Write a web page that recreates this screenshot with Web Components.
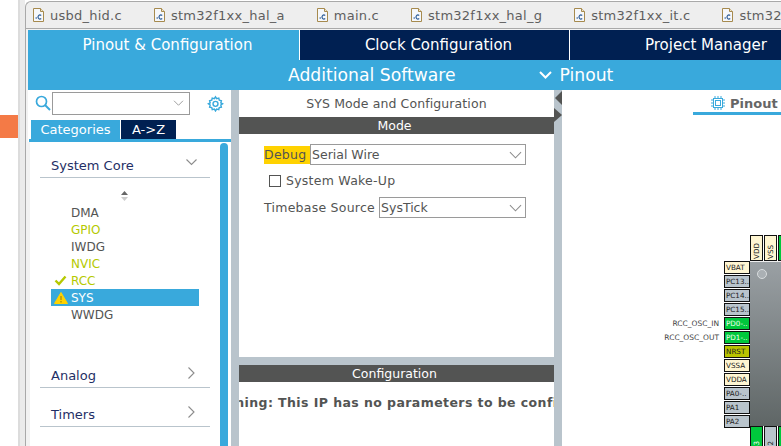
<!DOCTYPE html>
<html>
<head>
<meta charset="utf-8">
<style>
html, body { margin: 0; padding: 0; height: 446px; overflow: hidden; background: #fff; }
body { font-family: "DejaVu Sans", sans-serif; }
</style>
</head>
<body>
<cube-window></cube-window>
<script>
const blue = '#39a9dc'
const navy = '#002052'
const steel = '#b9c4cc'
const dark = '#535453'

const chevronDown = `<svg width="14" height="8" viewBox="0 0 14 8"><path d="M1 1l6 6 6-6" fill="none" stroke="currentColor" stroke-width="1.1"/></svg>`

class FileTab extends HTMLElement {
        constructor () {
                super()
                this.attachShadow({ mode: 'open' }).innerHTML = `
<style>
:host { display: flex; align-items: center; gap: 6px; flex: none; margin-right: 32px; font-size: 13px; color: #5e5e5e; letter-spacing: .25px; white-space: nowrap; }
svg { flex: none; display: block; }
</style>
<svg width="11" height="14" viewBox="0 0 11 14">
        <path d="M.5.5h7l3 3v10H.5z" fill="#f6f8fb" stroke="#a68a4e"/>
        <path d="M7.5.5v3h3" fill="#efe6cc" stroke="#a68a4e"/>
        <circle cx="3.2" cy="10" r=".8" fill="#2f5f9a"/>
        <path d="M8.2 7.4a2 2 0 1 0 0 3.2" fill="none" stroke="#2f5f9a" stroke-width="1.2"/>
</svg>
<slot></slot>`
        }
}

class FileTabs extends HTMLElement {
        constructor () {
                super()
                this.attachShadow({ mode: 'open' }).innerHTML = `
<style>
:host { display: flex; align-items: center; box-sizing: border-box; height: 28px; margin-top: 1px; padding-left: 7px; background: #eeeeee; border-top: 1px solid #a9a9a9; border-bottom: 1px solid #a9a9a9; border-left: 1px solid #a9a9a9; border-top-left-radius: 6px; overflow: hidden; }
</style>
<slot></slot>`
        }
}

class PerspectiveBar extends HTMLElement {
        constructor () {
                super()
                this.attachShadow({ mode: 'open' }).innerHTML = `
<style>
:host { display: block; font-size: 15px; color: #fff; }
.tabs { display: grid; grid-template-columns: 271px 270px 1fr; height: 30px; background: ${navy}; }
.tabs div { display: flex; align-items: center; justify-content: center; padding-left: 8px; box-sizing: border-box; }
.tabs div + div { border-left: 1px solid #fff; }
.tabs .on { background: ${blue}; }
.tabs .third { padding-left: 75px; justify-content: flex-start; white-space: nowrap; }
.sub { display: flex; align-items: center; height: 30px; background: ${blue}; font-size: 17.200px; padding-left: 260px; box-sizing: border-box; padding-bottom: 1px; }
.sub svg { margin-left: 83px; margin-right: 8px; color: #fff; }
</style>
<div class="tabs">
        <div class="on">Pinout &amp; Configuration</div>
        <div>Clock Configuration</div>
        <div class="third">Project Manager</div>
</div>
<div class="sub">
        <span>Additional Software</span>
        <svg width="13" height="8" viewBox="0 0 13 8"><path d="M1 1l5.500 5.500L12 1" fill="none" stroke="#fff" stroke-width="2"/></svg>
        <span>Pinout</span>
</div>`
        }
}

class CategoryRow extends HTMLElement {
        constructor () {
                super()
                const open = this.hasAttribute('open')
                this.attachShadow({ mode: 'open' }).innerHTML = `
<style>
:host { display: flex; align-items: center; justify-content: space-between; box-sizing: border-box; height: 25px; width: 170px; margin-left: 10px; padding: 0 13px 0 11px; border-bottom: 1px solid ${steel}; font-size: 13px; color: #1f2f66; }
:host(:not([open])) { padding-right: 15px; }
svg { display: block; color: #8c8c8c; margin-bottom: 5px; }
</style>
<slot></slot>
${open
        ? `<svg width="11" height="7" viewBox="0 0 11 7"><path d="M.5.5l5 5 5-5" fill="none" stroke="currentColor" stroke-width="1.1"/></svg>`
        : `<svg width="7" height="12" viewBox="0 0 7 12"><path d="M.5.5l5.500 5.500L.5 11.500" fill="none" stroke="currentColor" stroke-width="1.1"/></svg>`}`
        }
}

class PeripheralItem extends HTMLElement {
        constructor () {
                super()
                const state = this.getAttribute('state') || ''
                let mark = ''
                if (state === 'ok') {
                        mark = `<svg width="13" height="11" viewBox="0 0 13 11"><path d="M1.500 5.500l3.500 3.500L11.500 1.500" fill="none" stroke="#b5c900" stroke-width="2.400"/></svg>`
                }
                if (state === 'warn') {
                        mark = `<svg width="14" height="12" viewBox="0 0 14 12"><path d="M7 .5L13.500 11.500H.5z" fill="#ffd200" stroke="#ffd200"/><path d="M7 4v4M7 9v1.500" stroke="#8a7a10" stroke-width="1"/></svg>`
                }
                this.attachShadow({ mode: 'open' }).innerHTML = `
<style>
:host { display: flex; align-items: center; box-sizing: border-box; height: 17px; width: 148px; font-size: 12px; color: #535453; }
:host([tone="lime"]) { color: #b5c900; }
:host([state="ok"]) { color: #b5c900; }
:host([state="warn"]) { background: ${blue}; color: #fff; }
.mark { width: 20px; display: flex; justify-content: center; flex: none; padding-right: 1px; box-sizing: border-box; }
svg { display: block; }
</style>
<span class="mark">${mark}</span><slot></slot>`
        }
}

class CategoryPanel extends HTMLElement {
        constructor () {
                super()
                this.attachShadow({ mode: 'open' }).innerHTML = `
<style>
:host { display: flex; flex-direction: column; flex: none; width: 203px; height: 356px; overflow: hidden; background: #fff; position: relative; }
.search { display: flex; align-items: center; height: 30px; padding: 0 0 4px 7px; box-sizing: border-box; }
.combo { display: flex; align-items: center; justify-content: flex-end; box-sizing: border-box; width: 138px; height: 23px; margin-left: 1px; border: 1px solid #9a9a9a; padding-right: 5px; color: #8c8c8c; }
.gear { margin-left: 17px; }
.switch { display: flex; height: 19px; padding-left: 3px; font-size: 13px; color: #fff; }
.switch div { display: flex; align-items: center; justify-content: center; }
.switch .cat { width: 89px; background: ${blue}; }
.switch .az { width: 55px; margin-left: 1px; background: ${navy}; }
.rule { height: 3px; margin-left: 1px; background: ${blue}; flex: none; }
.body { position: relative; flex: 1; padding-top: 11px; border-left: 2px solid #f2f2f2; }
.scroll { position: absolute; left: 190px; top: 1px; bottom: 0; width: 8px; background: ${blue}; border-radius: 4px 4px 0 0; }
.sort { display: block; margin: 12px 0 2px 90px; }
.list { display: flex; flex-direction: column; margin-left: 21px; }
.analog { margin-top: 40px; }
.timers { margin-top: 14px; }
</style>
<div class="search">
        <svg width="16" height="16" viewBox="0 0 16 16"><circle cx="6.500" cy="6.500" r="5" fill="none" stroke="${blue}" stroke-width="1.700"/><path d="M10 10l5 5" stroke="${blue}" stroke-width="2"/></svg>
        <div class="combo">${chevronDown.replace('width="14"', 'width="11"').replace('height="8"', 'height="6"')}</div>
        <svg class="gear" width="17" height="17" viewBox="0 0 24 24"><path d="M12 2.500l1.600 2.600 3-.8.7 3 3 .7-.8 3 2.600 1.500-2.600 1.600.8 3-3 .7-.7 3-3-.8L12 22.500l-1.600-2.500-3 .8-.7-3-3-.7.8-3L1.900 12.500l2.600-1.500-.8-3 3-.7.7-3 3 .8z" fill="none" stroke="${blue}" stroke-width="2"/><circle cx="12" cy="12.500" r="3.500" fill="none" stroke="${blue}" stroke-width="2"/></svg>
</div>
<div class="switch"><div class="cat">Categories</div><div class="az">A-&gt;Z</div></div>
<div class="rule"></div>
<div class="body">
        <div class="scroll"></div>
        <category-row open>System Core</category-row>
        <svg class="sort" width="9" height="12" viewBox="0 0 9 12"><path d="M4.500 1L8 5H1z" fill="#666"/><path d="M4.500 11L8 7H1z" fill="#ccc"/></svg>
        <div class="list">
                <peripheral-item>DMA</peripheral-item>
                <peripheral-item tone="lime">GPIO</peripheral-item>
                <peripheral-item>IWDG</peripheral-item>
                <peripheral-item tone="lime">NVIC</peripheral-item>
                <peripheral-item state="ok">RCC</peripheral-item>
                <peripheral-item state="warn">SYS</peripheral-item>
                <peripheral-item>WWDG</peripheral-item>
        </div>
        <category-row class="analog">Analog</category-row>
        <category-row class="timers">Timers</category-row>
</div>`
        }
}

class SelectBox extends HTMLElement {
        constructor () {
                super()
                this.attachShadow({ mode: 'open' }).innerHTML = `
<style>
:host { display: flex; align-items: center; justify-content: space-between; box-sizing: border-box; height: 21px; border: 1px solid #9a9a9a; padding: 0 3px 0 1px; font-size: 12.500px; color: #535453; background: #fff; letter-spacing: 0; }
svg { color: #8c8c8c; margin-top: 1px; }
</style>
<slot></slot>${chevronDown.replace('width="14"', 'width="13"')}`
        }
}

class ModePanel extends HTMLElement {
        constructor () {
                super()
                this.attachShadow({ mode: 'open' }).innerHTML = `
<style>
:host { display: flex; flex-direction: column; flex: none; width: 315px; height: 356px; background: ${steel}; overflow: hidden; font-size: 12.500px; color: #535453; letter-spacing: .25px; }
.top { height: 267px; flex: none; background: #fff; }
.title { height: 27px; display: flex; align-items: center; justify-content: center; box-sizing: border-box; font-size: 12.500px; letter-spacing: .1px; }
.head { height: 17px; display: flex; align-items: center; justify-content: center; box-sizing: border-box; padding-right: 4px; background: ${dark}; color: #fff; font-size: 12.500px; letter-spacing: 0; }
.form { padding: 10px 28px 0 25px; }
.row { display: flex; align-items: center; }
.debug { background: #ffd200; width: 46px; height: 18px; display: flex; align-items: center; flex: none; }
.row select-box { flex: 1; }
.wake { height: 32px; padding-left: 5px; gap: 5px; }
.wake span:last-child { margin-bottom: 2px; }
.box { width: 12px; height: 12px; box-sizing: border-box; border: 1px solid #535453; }
.time { gap: 4px; }
.bottom { margin-top: 8px; flex: 1; background: #fff; }
.warn { padding-top: 13px; font-size: 12.500px; font-weight: bold; white-space: nowrap; margin-left: -33px; letter-spacing: .42px; }
</style>
<div class="top">
        <div class="title">SYS Mode and Configuration</div>
        <div class="head">Mode</div>
        <div class="form">
                <div class="row"><span class="debug">Debug</span><select-box>Serial Wire</select-box></div>
                <div class="row wake"><span class="box"></span><span>System Wake-Up</span></div>
                <div class="row time"><span>Timebase Source</span><select-box>SysTick</select-box></div>
        </div>
</div>
<div class="bottom">
        <div class="head">Configuration</div>
        <div class="warn">Warning: This IP has no parameters to be configured.</div>
</div>`
        }
}

class ChipPin extends HTMLElement {
        constructor () {
                super()
                this.attachShadow({ mode: 'open' }).innerHTML = `
<style>
:host { display: flex; align-items: center; box-sizing: border-box; background: ${steel}; color: #222; border: 1px solid #111; font-size: 7.200px; overflow: hidden; white-space: nowrap; padding-left: 1px; flex: none; }
:host([kind="power"]) { background: #fff6d2; }
:host([kind="green"]) { background: #00c83c; color: #f0fff0; }
:host([kind="lime"]) { background: #b9c300; }
:host([side="left"]) { width: 26px; height: 13px; margin-bottom: 1px; }
:host([side="top"]) { width: 13px; height: 26px; margin-right: 1px; writing-mode: vertical-rl; transform: rotate(180deg); padding: 1px 0 0 0; justify-content: flex-start; }
</style>
<slot></slot>`
        }
}

class ChipView extends HTMLElement {
        constructor () {
                super()
                this.attachShadow({ mode: 'open' }).innerHTML = `
<style>
:host { display: block; position: relative; flex: 1; height: 356px; background: #fff; overflow: hidden; }
.tab { position: absolute; left: 131px; top: 0; width: 100px; height: 25px; box-sizing: border-box; border-bottom: 3px solid ${blue}; display: flex; align-items: center; gap: 5px; padding: 4px 0 0 18px; font-size: 13px; font-weight: bold; color: #666; white-space: nowrap; }
.tab svg { flex: none; }
.left { position: absolute; left: 162px; top: 171px; display: flex; flex-direction: column; }
.topp { position: absolute; left: 188px; top: 145px; display: flex; }
.botp { position: absolute; left: 188px; top: 336px; display: flex; }
.chip { position: absolute; left: 188px; top: 171px; width: 60px; height: 165px; background: linear-gradient(#9aa0a4, #5f6666); border-top: 1px solid #eee; box-sizing: border-box; }
.dot { position: absolute; left: 7px; top: 7px; width: 8px; height: 8px; border-radius: 50%; background: #aab0b4; border: 1px solid #d8dcde; }
.sig { position: absolute; right: 62px; font-size: 7.500px; color: #444; white-space: nowrap; }
</style>
<div class="tab">
        <svg width="14" height="14" viewBox="0 0 14 14"><rect x="2.500" y="2.500" width="9" height="9" fill="none" stroke="${blue}"/><rect x="4.500" y="4.500" width="5" height="5" fill="none" stroke="${blue}"/><path d="M0 4h2M0 7h2M0 10h2M12 4h2M12 7h2M12 10h2M4 0v2M7 0v2M10 0v2M4 12v2M7 12v2M10 12v2" stroke="${blue}"/></svg>
        <span>Pinout</span>
</div>
<div class="topp">
        <chip-pin side="top" kind="power">VDD</chip-pin>
        <chip-pin side="top" kind="power">VSS</chip-pin>
        <chip-pin side="top" kind="green"></chip-pin>
</div>
<div class="chip"><div class="dot"></div></div>
<div class="left">
        <chip-pin side="left" kind="power">VBAT</chip-pin>
        <chip-pin side="left">PC13..</chip-pin>
        <chip-pin side="left">PC14..</chip-pin>
        <chip-pin side="left">PC15..</chip-pin>
        <chip-pin side="left" kind="green">PD0-..</chip-pin>
        <chip-pin side="left" kind="green">PD1-..</chip-pin>
        <chip-pin side="left" kind="lime">NRST</chip-pin>
        <chip-pin side="left" kind="power">VSSA</chip-pin>
        <chip-pin side="left" kind="power">VDDA</chip-pin>
        <chip-pin side="left">PA0-..</chip-pin>
        <chip-pin side="left">PA1</chip-pin>
        <chip-pin side="left">PA2</chip-pin>
</div>
<span class="sig" style="top:229px">RCC_OSC_IN</span>
<span class="sig" style="top:243px">RCC_OSC_OUT</span>
<div class="botp">
        <chip-pin side="top" kind="green">43</chip-pin>
        <chip-pin side="top">32</chip-pin>
        <chip-pin side="top" kind="green"></chip-pin>
</div>`
        }
}

class Splitter extends HTMLElement {
        constructor () {
                super()
                this.attachShadow({ mode: 'open' }).innerHTML = `
<style>
:host { display: block; flex: none; width: 8px; background: ${steel}; }
</style>
<slot></slot>`
        }
}

class CubeWindow extends HTMLElement {
        constructor () {
                super()
                this.attachShadow({ mode: 'open' }).innerHTML = `
<style>
:host { display: flex; height: 446px; overflow: hidden; font-family: "DejaVu Sans", sans-serif; }
.gutter { flex: none; width: 18px; padding-top: 115px; box-sizing: border-box; }
.orange { height: 23px; background: #f47a46; }
.frame { flex: none; width: 7px; box-sizing: border-box; border-left: 2px solid #dcdcdc; background: #ebebeb; }
.main { flex: 1; min-width: 0; }
.stage { padding: 1px 0 0 2px; border-left: 1px solid #a9a9a9; background: #f2f2f2; }
.work { display: flex; }
.arrows { display: block; margin-top: 1px; }
</style>
<div class="gutter"><div class="orange"></div></div>
<div class="frame"></div>
<div class="main">
        <file-tabs>
                <file-tab>usbd_hid.c</file-tab>
                <file-tab>stm32f1xx_hal_a</file-tab>
                <file-tab>main.c</file-tab>
                <file-tab>stm32f1xx_hal_g</file-tab>
                <file-tab>stm32f1xx_it.c</file-tab>
                <file-tab>stm32f1xx_hal</file-tab>
        </file-tabs>
        <div class="stage">
                <perspective-bar></perspective-bar>
                <div class="work">
                        <category-panel></category-panel>
                        <pane-splitter></pane-splitter>
                        <mode-panel></mode-panel>
                        <pane-splitter>
                                <svg class="arrows" width="8" height="32" viewBox="0 0 8 32"><path d="M8 0v14L1 7z" fill="#535453"/><path d="M0 17v14l8-7z" fill="#535453"/></svg>
                        </pane-splitter>
                        <chip-view></chip-view>
                </div>
        </div>
</div>`
        }
}

customElements.define('file-tab', FileTab)
customElements.define('file-tabs', FileTabs)
customElements.define('perspective-bar', PerspectiveBar)
customElements.define('category-row', CategoryRow)
customElements.define('peripheral-item', PeripheralItem)
customElements.define('category-panel', CategoryPanel)
customElements.define('select-box', SelectBox)
customElements.define('mode-panel', ModePanel)
customElements.define('chip-pin', ChipPin)
customElements.define('chip-view', ChipView)
customElements.define('pane-splitter', Splitter)
customElements.define('cube-window', CubeWindow)
</script>
</body>
</html>
